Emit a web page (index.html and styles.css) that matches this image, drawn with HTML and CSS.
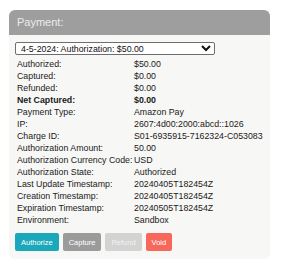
FILE: index.html
```html
<!DOCTYPE html>
<html>
<head>
<meta charset="utf-8">
<link rel="stylesheet" href="styles.css">
</head>
<body>
<div class="panel">
  <div class="panel-head">Payment:</div>
  <div class="panel-body">
    <select class="txn">
      <option>4-5-2024: Authorization: $50.00</option>
    </select>
    <div class="rows">
      <div class="lbl">Authorized:</div><div class="val">$50.00</div>
      <div class="lbl">Captured:</div><div class="val">$0.00</div>
      <div class="lbl">Refunded:</div><div class="val">$0.00</div>
      <div class="lbl bold">Net Captured:</div><div class="val bold">$0.00</div>
      <div class="lbl">Payment Type:</div><div class="val">Amazon Pay</div>
      <div class="lbl">IP:</div><div class="val">2607:4d00:2000:abcd::1026</div>
      <div class="lbl">Charge ID:</div><div class="val">S01-6935915-7162324-C053083</div>
      <div class="lbl">Authorization Amount:</div><div class="val">50.00</div>
      <div class="lbl">Authorization Currency Code:</div><div class="val">USD</div>
      <div class="lbl">Authorization State:</div><div class="val">Authorized</div>
      <div class="lbl">Last Update Timestamp:</div><div class="val">20240405T182454Z</div>
      <div class="lbl">Creation Timestamp:</div><div class="val">20240405T182454Z</div>
      <div class="lbl">Expiration Timestamp:</div><div class="val">20240505T182454Z</div>
      <div class="lbl">Environment:</div><div class="val">Sandbox</div>
    </div>
    <div class="actions">
      <button class="btn btn-auth">Authorize</button>
      <button class="btn btn-capture">Capture</button>
      <button class="btn btn-refund">Refund</button>
      <button class="btn btn-void">Void</button>
    </div>
  </div>
</div>
</body>
</html>
```

FILE: styles.css
```css
html, body {
  margin: 0;
  padding: 0;
  background: #ffffff;
}
body {
  font-family: "Liberation Sans", Arial, sans-serif;
  color: #1a1a1a;
}
.panel {
  margin: 10px 0 0 9px;
  width: 261px;
  border-radius: 6px;
  overflow: hidden;
  background: #f7f7f5;
}
.panel-head {
  height: 25px;
  background: #9e9e9e;
  color: #ececec;
  font-size: 11px;
  line-height: 25px;
  padding-left: 8px;
  box-sizing: border-box;
}
.panel-body {
  padding: 7px 6px 8px 6px;
}
.txn {
  display: block;
  width: 200px;
  height: 13px;
  margin: 0;
  padding: 0 1px;
  font-family: "Liberation Sans", Arial, sans-serif;
  font-size: 8.8px;
  color: #111;
  background: #fff;
  border: 1px solid #6e6e6e;
  border-radius: 2px;
  box-sizing: border-box;
}
.rows {
  display: grid;
  grid-template-columns: 117px auto;
  margin-top: 3px;
  padding-left: 2px;
  font-size: 8.8px;
  line-height: 12px;
}
.bold {
  font-weight: bold;
}
.actions {
  display: flex;
  gap: 4px;
  margin-top: 7px;
}
.btn {
  height: 18px;
  padding: 0 6px;
  border: 0;
  border-radius: 2px;
  font-family: "Liberation Sans", Arial, sans-serif;
  font-size: 7.5px;
  color: #ffffff;
  cursor: pointer;
}
.btn-auth { background: #1aa8ba; }
.btn-capture { background: #9b9b9b; }
.btn-refund { background: #d3d3d3; color: #f2f2f2; }
.btn-void { background: #f8685a; }
```
